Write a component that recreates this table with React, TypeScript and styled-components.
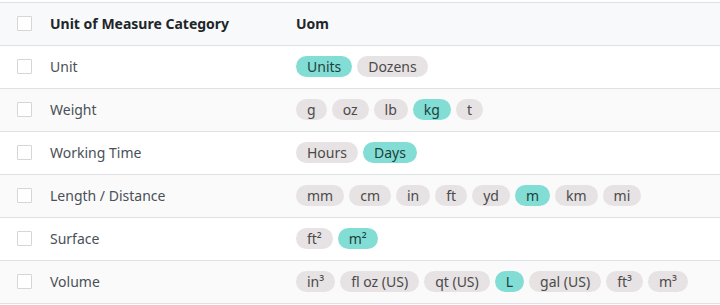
import styled, { createGlobalStyle } from 'styled-components';

const GlobalStyle = createGlobalStyle`
  body {
    margin: 0;
    background: #ffffff;
    font-family: 'Noto Sans', 'Open Sans', sans-serif;
    font-size: 14px;
    color: #495057;
  }
`;

const Table = styled.div`
  padding-top: 2px;
  width: 720px;
`;

const Row = styled.div<{ header?: boolean; striped?: boolean }>`
  display: grid;
  grid-template-columns: 50px 246px 1fr;
  align-items: center;
  box-sizing: border-box;
  height: 43px;
  padding-bottom: 2px;
  border-top: 1px solid #dee2e6;
  background: ${({ header, striped }) =>
    header ? '#f8f9fa' : striped ? '#fafafa' : '#ffffff'};
  color: ${({ header }) => (header ? '#212529' : '#495057')};
  font-weight: ${({ header }) => (header ? 700 : 400)};
  &:last-child {
    height: 44px;
    border-bottom: 1px solid #dee2e6;
  }
`;

const CheckCell = styled.div`
  padding-left: 17px;
  display: flex;
  align-items: center;
`;

const Checkbox = styled.span`
  width: 15px;
  height: 15px;
  box-sizing: border-box;
  border: 1px solid #d6d6d6;
  border-radius: 1px;
  background: #fff;
`;

const Tags = styled.div`
  display: flex;
  gap: 5px;
  flex-wrap: nowrap;
`;

const Tag = styled.span<{ active?: boolean }>`
  display: inline-flex;
  align-items: center;
  height: 21px;
  padding: 0 11px;
  border-radius: 11px;
  font-size: 14px;
  background: ${({ active }) => (active ? '#82ddd4' : '#e7e2e3')};
  color: ${({ active }) => (active ? '#1f3f3c' : '#4a4a4a')};
`;

type Category = { name: string; uoms: string[]; ref: string };

const categories: Category[] = [
  { name: 'Unit', uoms: ['Units', 'Dozens'], ref: 'Units' },
  { name: 'Weight', uoms: ['g', 'oz', 'lb', 'kg', 't'], ref: 'kg' },
  { name: 'Working Time', uoms: ['Hours', 'Days'], ref: 'Days' },
  {
    name: 'Length / Distance',
    uoms: ['mm', 'cm', 'in', 'ft', 'yd', 'm', 'km', 'mi'],
    ref: 'm',
  },
  { name: 'Surface', uoms: ['ft²', 'm²'], ref: 'm²' },
  {
    name: 'Volume',
    uoms: ['in³', 'fl oz (US)', 'qt (US)', 'L', 'gal (US)', 'ft³', 'm³'],
    ref: 'L',
  },
];

export default function App() {
  return (
    <>
      <GlobalStyle />
      <Table>
        <Row header>
          <CheckCell>
            <Checkbox />
          </CheckCell>
          <div>Unit of Measure Category</div>
          <div>Uom</div>
        </Row>
        {categories.map((c, i) => (
          <Row key={c.name} striped={i % 2 === 1}>
            <CheckCell>
              <Checkbox />
            </CheckCell>
            <div>{c.name}</div>
            <Tags>
              {c.uoms.map((u) => (
                <Tag key={u} active={u === c.ref}>
                  {u}
                </Tag>
              ))}
            </Tags>
          </Row>
        ))}
      </Table>
    </>
  );
}
